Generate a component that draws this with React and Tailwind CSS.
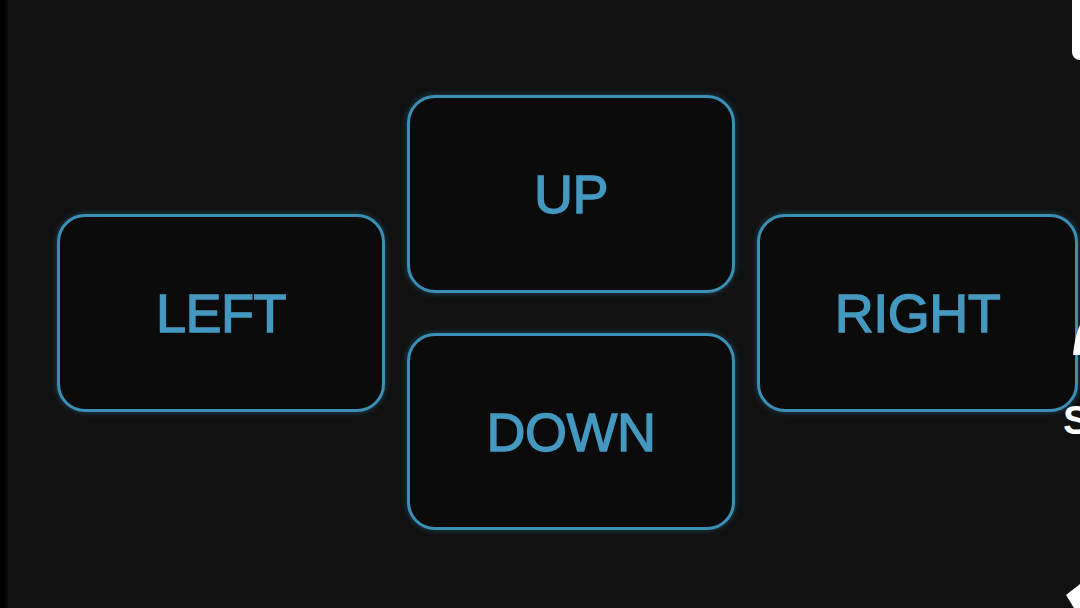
const Key = ({ label, className }) => (
    <div
        className={
            "flex items-center justify-center rounded-[28px] border-[3px] border-[#3b8fb5] bg-[#0b0b0c] shadow-[0_0_6px_rgba(50,140,185,0.45)] " +
            className
        }
    >
        <span className="text-[54px] leading-none tracking-[-0.01em] text-[#4599c0] [-webkit-text-stroke:1.3px_#4599c0] font-['Liberation_Sans',Arial,sans-serif]">
            {label}
        </span>
    </div>
);

const App = () => {
    return (
        <div className="relative flex w-[1080px] h-[608px] overflow-hidden bg-[#111111]">
            {/* dark edge on the left */}
            <div className="w-[9px] h-full shrink-0 bg-gradient-to-r from-black to-[#111111]" />

            <main className="flex items-center gap-[22px] pl-[48px] pt-[17px] h-full">
                <Key label="LEFT" className="w-[328px] h-[198px] shrink-0" />
                <div className="flex flex-col gap-[40px] shrink-0">
                    <Key label="UP" className="w-[328px] h-[198px]" />
                    <Key label="DOWN" className="w-[328px] h-[197px]" />
                </div>
                <Key label="RIGHT" className="w-[321px] h-[198px] shrink-0" />
            </main>

            {/* side overlay bits cut off at the right edge */}
            <div className="absolute right-0 top-0 w-[8px] h-[60px] rounded-bl-[8px] bg-white" />
            <svg className="absolute left-[1070px] top-[325px]" width="10" height="30" viewBox="0 0 10 30">
                <path d="M3 30 C4 20 6 8 10 0 L10 30 Z" fill="#ffffff" />
            </svg>
            <span className="absolute left-[1063px] top-[400px] text-[40px] leading-none font-semibold text-white font-['Liberation_Sans',Arial,sans-serif]">
                S
            </span>
            <svg className="absolute left-[1066px] top-[584px]" width="14" height="24" viewBox="0 0 14 24">
                <path d="M14 0 L0 11 L8 24 L14 24 Z" fill="#ffffff" />
            </svg>
        </div>
    );
};

export default App;
